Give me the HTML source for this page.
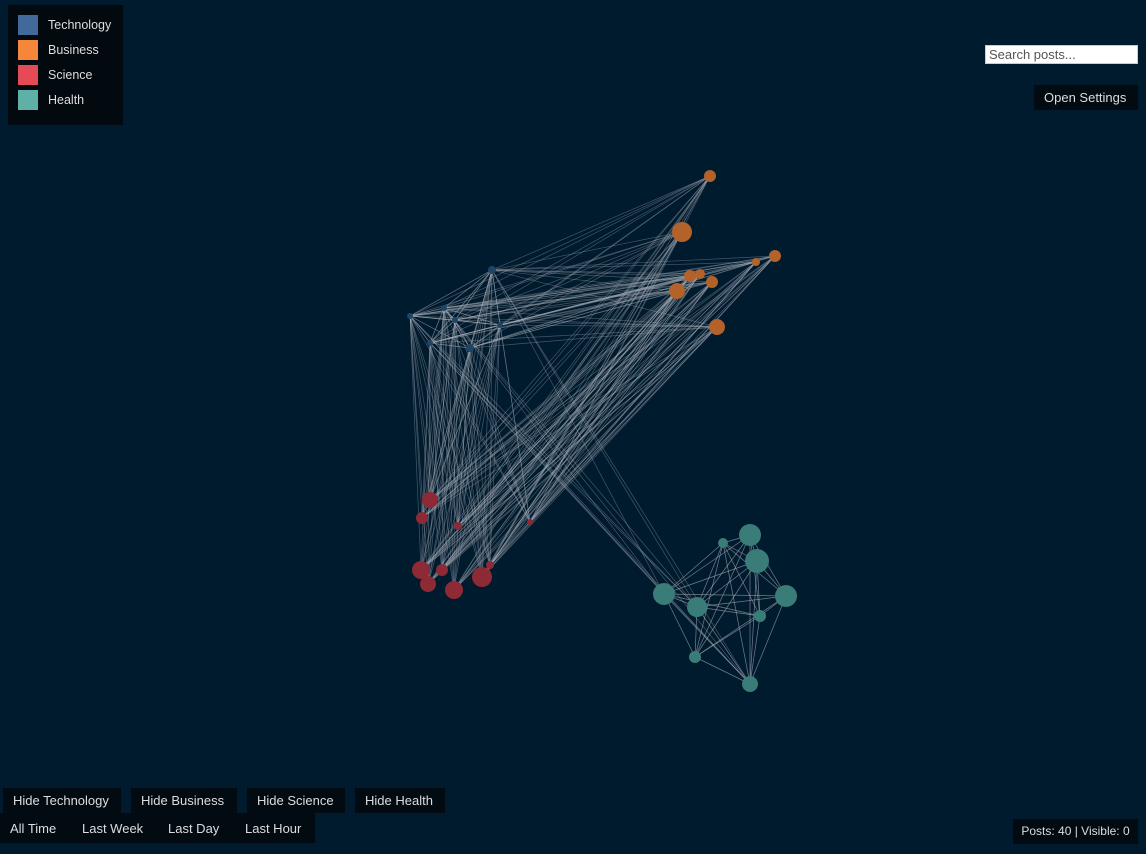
<!DOCTYPE html>
<html><head><meta charset="utf-8"><style>
body{margin:0;width:1146px;height:854px;background:#001b2e;overflow:hidden;font-family:"Liberation Sans",sans-serif;position:relative}
.legend{position:absolute;left:8px;top:5px;width:115px;height:120px;background:#02090f}
.li{position:absolute;left:10px;height:20px;display:flex;align-items:center;color:#ddd;font-size:12.5px}
.li span{width:20px;height:20px;margin-right:10px;display:inline-block}
.btn{position:absolute;background:#020b12;color:#ddd;font-size:13px;height:25px;line-height:25px;padding:0 10px;box-sizing:border-box}
input{position:absolute;left:985px;top:45px;width:145px;height:17px;border:1px solid #ccc;font-size:13px;padding:0 3px;font-family:"Liberation Sans",sans-serif;color:#555}
</style></head><body>
<div class="legend">
<div class="li" style="top:10px"><span style="background:#41699a"></span>Technology</div>
<div class="li" style="top:35px"><span style="background:#f5863a"></span>Business</div>
<div class="li" style="top:60px"><span style="background:#e44b55"></span>Science</div>
<div class="li" style="top:85px"><span style="background:#5fb0a6"></span>Health</div>
</div>
<input value="Search posts...">
<div class="btn" style="left:1034px;top:85px;width:104px">Open Settings</div>
<svg id="g" width="1146" height="854" style="position:absolute;left:0;top:0"></svg>
<div class="btn" style="left:3px;top:788px;width:118px">Hide Technology</div>
<div class="btn" style="left:131px;top:788px;width:106px">Hide Business</div>
<div class="btn" style="left:247px;top:788px;width:98px">Hide Science</div>
<div class="btn" style="left:355px;top:788px;width:90px">Hide Health</div>
<div style="position:absolute;left:0;top:813px;width:315px;height:30px;background:#020b12"></div>
<div class="btn" style="left:0;top:816px;background:none">All Time</div>
<div class="btn" style="left:72px;top:816px;background:none">Last Week</div>
<div class="btn" style="left:158px;top:816px;background:none">Last Day</div>
<div class="btn" style="left:235px;top:816px;background:none">Last Hour</div>
<div class="btn" style="left:1013px;top:819px;font-size:12px;padding:0;width:125px;text-align:center">Posts: 40 | Visible: 0</div>
<script>
var T=[[492,270,4],[410,316,3],[444,308,3],[430,343,3],[470,348,4],[455,320,3],[500,325,3]];
var B=[[710,176,6],[682,232,10],[775,256,6],[756,262,4],[690,276,6],[700,274,5],[712,282,6],[677,291,8],[717,327,8]];
var S=[[430,500,8],[422,518,6],[458,526,4],[530,522,3],[421,570,9],[428,584,8],[442,570,6],[454,590,9],[482,577,10],[490,565,4]];
var H=[[750,535,11],[723,543,5],[757,561,12],[786,596,11],[664,594,11],[697,607,10],[760,616,6],[695,657,6],[750,684,8]];
var g=document.getElementById('g'),s='';
function L(a,b){s+='<line x1="'+a[0]+'" y1="'+a[1]+'" x2="'+b[0]+'" y2="'+b[1]+'"/>';}
function all(A,C){A.forEach(function(a){C.forEach(function(b){if(a!==b)L(a,b);});});}
all(T,T);all(T,B);all(T,S);all(S,B);all(H,H);
T.slice(0,4).forEach(function(a){L(a,H[4]);L(a,H[5]);L(a,H[8]);});
B.slice(6).forEach(function(a){L(a,S[4]);});
var out='<g stroke="#a9b0b8" stroke-opacity="0.4" stroke-width="0.7">'+s+'</g>';
function N(A,c){A.forEach(function(n){out+='<circle cx="'+n[0]+'" cy="'+n[1]+'" r="'+n[2]+'" fill="'+c+'"/>';});}
N(T,'#1f4566');N(B,'#b3622a');N(S,'#8e2a35');N(H,'#3a7c78');
g.innerHTML=out;
</script>
</body></html>
